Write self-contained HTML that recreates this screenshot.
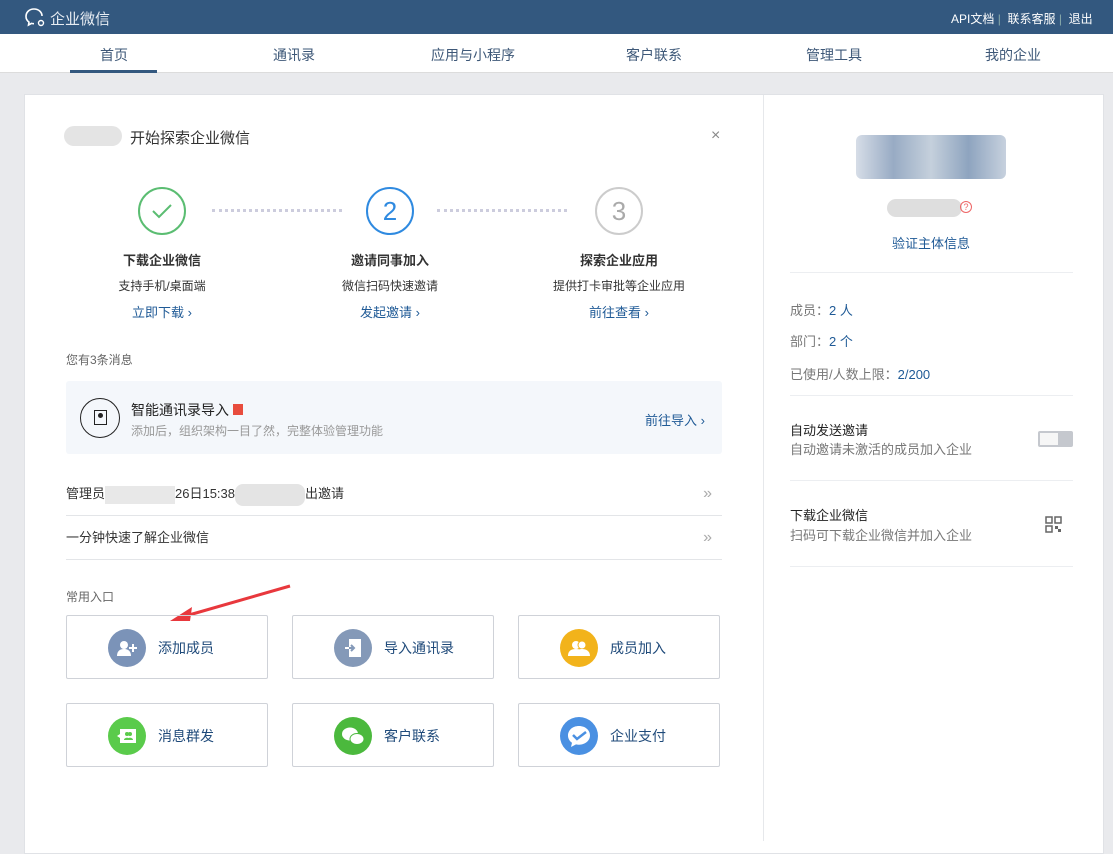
<!DOCTYPE html>
<html><head><meta charset="utf-8"><style>
*{margin:0;padding:0;box-sizing:border-box}
body{width:1113px;height:841px;overflow:hidden;background:#e9eaed;font-family:"Liberation Sans","Noto Sans CJK SC",sans-serif;font-size:13px;color:#333;position:relative}
.abs{position:absolute}
.top{left:0;top:0;width:1113px;height:34px;background:#33587f;color:#fff}
.nav{left:0;top:34px;width:1113px;height:39px;background:#fff;border-bottom:1px solid #dcdcdc}
.nav span{position:absolute;top:11px;font-size:14px;color:#3e5878}
.card{left:24px;top:94px;width:1080px;height:760px;background:#fff;border:1px solid #e0e2e6}
.c{text-align:center;width:200px;font-size:12px}
.circ{width:48px;height:48px;border-radius:50%;border:2px solid;display:flex;align-items:center;justify-content:center;font-size:26px}
.blue{color:#1f5a96}
.dots{height:0;border-top:3px dotted #ccd;width:130px}
.row{left:66px;width:656px;height:44px;border-bottom:1px solid #e3e5e8;font-size:13px;line-height:44px}
.box{width:202px;height:64px;border:1px solid #cfd2d8;border-radius:2px}
.box .ic{position:absolute;left:41px;top:13px;width:38px;height:38px;border-radius:50%;display:flex;align-items:center;justify-content:center}
.box .t{position:absolute;left:91px;top:22px;font-size:14px;color:#1f4a7a}
.rt{font-size:13px;color:#777}
.hr{height:1px;background:#eceef1}
</style></head><body>
<div class="abs top">
 <svg class="abs" style="left:24px;top:7px" width="24" height="22" viewBox="0 0 24 22"><path d="M10 2C5 2 2 5.5 2 9.5c0 2.3 1.2 4.3 3 5.6L4.5 18l3-1.6c.8.2 1.7.3 2.5.3" fill="none" stroke="#fff" stroke-width="1.6"/><path d="M10 2c4.5 0 8 3 8 7" fill="none" stroke="#fff" stroke-width="1.6"/><circle cx="17" cy="16" r="2.5" fill="none" stroke="#fff" stroke-width="1.4"/></svg>
 <span class="abs" style="left:50px;top:8px;font-size:15px;color:#e8edf3">企业微信</span>
 <span class="abs" style="left:951px;top:10px;font-size:12px">API文档 <span style="color:#8aa">|</span>&nbsp; 联系客服 <span style="color:#8aa">|</span>&nbsp; 退出</span>
</div>
<div class="abs nav">
 <span style="left:100px">首页</span>
 <div class="abs" style="left:70px;top:36px;width:87px;height:3px;background:#33587f"></div>
 <span style="left:273px">通讯录</span><span style="left:431px">应用与小程序</span><span style="left:626px">客户联系</span><span style="left:806px">管理工具</span><span style="left:985px">我的企业</span>
</div>
<div class="abs card"></div>
<div class="abs" style="left:763px;top:95px;width:1px;height:746px;background:#e6e8eb"></div>
<div class="abs" style="left:64px;top:126px;width:58px;height:20px;border-radius:10px;background:#e4e4e4"></div>
<div class="abs" style="left:130px;top:127px;font-size:15px">开始探索企业微信</div>
<div class="abs" style="left:711px;top:127px;font-size:16px;color:#888">×</div>

<div class="abs circ" style="left:138px;top:187px;border-color:#5bbd72;color:#5bbd72"><svg width="22" height="16"><path d="M2 8l6 6L20 2" fill="none" stroke="#5bbd72" stroke-width="2"/></svg></div>
<div class="abs circ" style="left:366px;top:187px;border-color:#2f8ae0;color:#2f8ae0">2</div>
<div class="abs circ" style="left:595px;top:187px;border-color:#ccc;color:#aaa">3</div>
<div class="abs dots" style="left:212px;top:209px"></div>
<div class="abs dots" style="left:437px;top:209px"></div>
<div class="abs c" style="left:62px;top:250px"><b style="font-size:13px">下载企业微信</b><div style="margin-top:8px">支持手机/桌面端</div><div class="blue" style="margin-top:8px;font-size:13px">立即下载 ›</div></div>
<div class="abs c" style="left:290px;top:250px"><b style="font-size:13px">邀请同事加入</b><div style="margin-top:8px">微信扫码快速邀请</div><div class="blue" style="margin-top:8px;font-size:13px">发起邀请 ›</div></div>
<div class="abs c" style="left:519px;top:250px"><b style="font-size:13px">探索企业应用</b><div style="margin-top:8px">提供打卡审批等企业应用</div><div class="blue" style="margin-top:8px;font-size:13px">前往查看 ›</div></div>

<div class="abs" style="left:66px;top:351px;font-size:12px;color:#666">您有3条消息</div>
<div class="abs" style="left:66px;top:381px;width:656px;height:73px;background:#f4f7fb;border-radius:3px"></div>
<div class="abs" style="left:80px;top:398px;width:40px;height:40px;border-radius:50%;border:1.5px solid #222"></div>
<div class="abs" style="left:94px;top:410px;width:13px;height:15px;border:1.5px solid #222"></div>
<div class="abs" style="left:98px;top:413px;width:5px;height:5px;border-radius:50%;background:#222"></div>
<div class="abs" style="left:131px;top:400px;font-size:14px;color:#222">智能通讯录导入 <span style="display:inline-block;width:10px;height:11px;background:#e84c3d"></span></div>
<div class="abs" style="left:131px;top:422px;font-size:12px;color:#999">添加后，组织架构一目了然，完整体验管理功能</div>
<div class="abs blue" style="left:645px;top:410px">前往导入 ›</div>
<div class="abs row" style="top:472px">管理员<span style="display:inline-block;width:70px;height:18px;background:#e8e8e8;vertical-align:middle"></span>26日15:38<span style="display:inline-block;width:70px;height:22px;background:#e4e4e4;vertical-align:middle;border-radius:8px"></span>出邀请<span style="position:absolute;right:10px;color:#aaa;font-size:16px">»</span></div>
<div class="abs row" style="top:516px">一分钟快速了解企业微信<span style="position:absolute;right:10px;color:#aaa;font-size:16px">»</span></div>
<div class="abs" style="left:66px;top:588px;font-size:12px;color:#666">常用入口</div>
<svg class="abs" style="left:168px;top:583px" width="125" height="42"><path d="M122 3L14 34" stroke="#e8383d" stroke-width="3"/><path d="M2 38l22-14-2 14z" fill="#e8383d"/></svg>

<div class="abs box" style="left:66px;top:615px"><div class="ic" style="background:#7b93b8"><svg width="22" height="18"><circle cx="8" cy="6" r="4" fill="#fff"/><path d="M1 17c0-5 3-7 7-7s7 2 7 7z" fill="#fff"/><path d="M17 5v8M13 9h8" stroke="#fff" stroke-width="2"/></svg></div><div class="t">添加成员</div></div>
<div class="abs box" style="left:292px;top:615px"><div class="ic" style="background:#8499b8"><svg width="18" height="20"><rect x="5" y="1" width="12" height="18" fill="#fff"/><path d="M1 10h9M7 7l3 3-3 3" stroke="#8499b8" stroke-width="2" fill="none"/><path d="M1 10h4" stroke="#fff" stroke-width="2"/></svg></div><div class="t">导入通讯录</div></div>
<div class="abs box" style="left:518px;top:615px"><div class="ic" style="background:#f2b31b"><svg width="24" height="18"><circle cx="9" cy="6" r="4" fill="#fff"/><circle cx="15" cy="6" r="4" fill="#fff" stroke="#f2b31b"/><path d="M1 17c0-5 3-7 8-7s8 2 8 7zM8 17c0-5 3-7 7-7s8 2 8 7z" fill="#fff"/></svg></div><div class="t">成员加入</div></div>
<div class="abs box" style="left:66px;top:703px"><div class="ic" style="background:#5acb4b"><svg width="20" height="16"><path d="M3 1h16v14H3V10L0 8l3-2z" fill="#fff"/><circle cx="10" cy="6" r="2" fill="#5acb4b"/><circle cx="13" cy="6" r="2" fill="#5acb4b"/><path d="M7 12c0-3 6-3 6 0zM10 12c0-3 6-3 6 0z" fill="#5acb4b"/></svg></div><div class="t">消息群发</div></div>
<div class="abs box" style="left:292px;top:703px"><div class="ic" style="background:#4bb93d"><svg width="24" height="20"><ellipse cx="9" cy="8" rx="8" ry="6.5" fill="#fff"/><ellipse cx="16" cy="13" rx="7" ry="5.5" fill="#fff" stroke="#4bb93d"/></svg></div><div class="t">客户联系</div></div>
<div class="abs box" style="left:518px;top:703px"><div class="ic" style="background:#4a90e2"><svg width="26" height="24"><path d="M13 2C6.5 2 2 6.3 2 11.5c0 3 1.5 5.5 4 7.3L5 23l5-2.6c1 .2 2 .3 3 .3 6.5 0 11-4.3 11-9.3S19.5 2 13 2z" fill="#fff"/><path d="M7 11l4 4 9-7" stroke="#4a90e2" stroke-width="2.5" fill="none"/></svg></div><div class="t">企业支付</div></div>

<div class="abs" style="left:856px;top:135px;width:150px;height:44px;background:linear-gradient(90deg,#d6dde7,#98abc4,#c5d0dc,#8ea4bf,#c7d1de);border-radius:6px"></div>
<div class="abs" style="left:887px;top:199px;width:75px;height:18px;border-radius:9px;background:#dedede"></div>
<div class="abs" style="left:960px;top:201px;width:12px;height:12px;border-radius:50%;border:1px solid #e66;font-size:9px;color:#e66;text-align:center;line-height:11px">?</div>
<div class="abs blue" style="left:892px;top:233px">验证主体信息</div>
<div class="abs hr" style="left:790px;top:272px;width:283px"></div>
<div class="abs rt" style="left:790px;top:300px">成员：<span class="blue">2 人</span></div>
<div class="abs rt" style="left:790px;top:331px">部门：<span class="blue">2 个</span></div>
<div class="abs rt" style="left:790px;top:364px">已使用/人数上限：<span class="blue">2/200</span></div>
<div class="abs hr" style="left:790px;top:395px;width:283px"></div>
<div class="abs" style="left:790px;top:420px;color:#222">自动发送邀请</div>
<div class="abs rt" style="left:790px;top:439px">自动邀请未激活的成员加入企业</div>
<div class="abs" style="left:1038px;top:431px;width:35px;height:16px;background:#c5c8ce;border-radius:2px"><div style="margin:2px;width:18px;height:12px;background:#f6f6f6"></div></div>
<div class="abs hr" style="left:790px;top:480px;width:283px"></div>
<div class="abs" style="left:790px;top:505px;color:#222">下载企业微信</div>
<div class="abs rt" style="left:790px;top:525px">扫码可下载企业微信并加入企业</div>
<svg class="abs" style="left:1045px;top:516px" width="17" height="17"><g fill="none" stroke="#666" stroke-width="1.5"><rect x="1" y="1" width="6" height="6"/><rect x="10" y="1" width="6" height="6"/><rect x="1" y="10" width="6" height="6"/></g><path d="M10 10h3v3h3v3h-3v-3h-3z" fill="#666"/></svg>
<div class="abs hr" style="left:790px;top:566px;width:283px"></div>
</body></html>
